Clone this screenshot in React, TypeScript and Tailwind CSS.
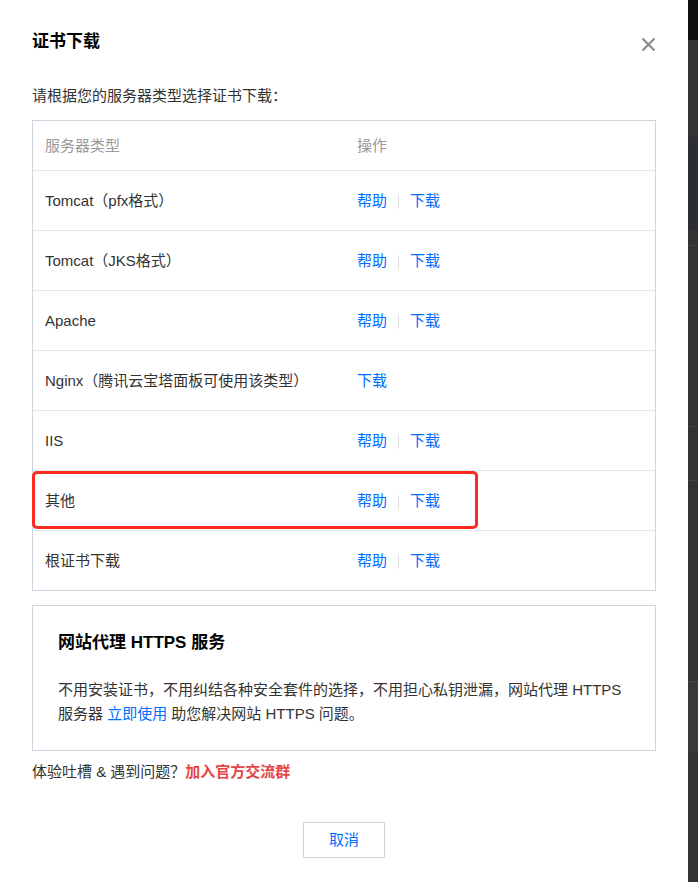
import React from 'react';

type Row = { name: string; help: boolean };

const rows: Row[] = [
  { name: 'Tomcat（pfx格式）', help: true },
  { name: 'Tomcat（JKS格式）', help: true },
  { name: 'Apache', help: true },
  { name: 'Nginx（腾讯云宝塔面板可使用该类型）', help: false },
  { name: 'IIS', help: true },
  { name: '其他', help: true },
  { name: '根证书下载', help: true },
];

const CloseIcon: React.FC = () => (
  <svg width="15" height="15" viewBox="0 0 15 15" className="mt-[7px]">
    <path d="M1.5 1.5 L13.5 13.5 M13.5 1.5 L1.5 13.5" stroke="#888" strokeWidth="2" fill="none" />
  </svg>
);

const Actions: React.FC<{ help: boolean }> = ({ help }) => (
  <div className="flex items-center text-[#006eff]">
    {help && (
      <>
        <span>帮助</span>
        <span className="inline-block w-px h-[14px] bg-[#dddddd] mx-[11px]" />
      </>
    )}
    <span>下载</span>
  </div>
);

const App: React.FC = () => {
  return (
    <div className="flex w-[698px] min-h-[882px] font-['Liberation_Sans','Noto_Sans_CJK_SC',sans-serif] text-[15px] text-[#333]">
      <div className="w-[688px] bg-white px-[32px] pt-[30px] pb-[24px] flex flex-col">
        <div className="flex justify-between items-start">
          <h2 className="text-[17px] leading-[24px] font-bold text-black">证书下载</h2>
          <CloseIcon />
        </div>

        <p className="mt-[32px] leading-[20px]">请根据您的服务器类型选择证书下载：</p>

        <div className="relative mt-[14px] border border-[#cfd5de]">
          <div className="flex items-center h-[49px] pt-px text-[#999]">
            <div className="w-1/2 px-[12px]">服务器类型</div>
            <div className="w-1/2 pl-[13px] pr-[12px]">操作</div>
          </div>
          {rows.map((r) => (
            <div key={r.name} className="flex items-center h-[60px] pt-[2px] border-t border-[#e5e8ed]">
              <div className="w-1/2 px-[12px]">{r.name}</div>
              <div className="w-1/2 pl-[13px] pr-[12px]">
                <Actions help={r.help} />
              </div>
            </div>
          ))}
          {/* annotation over the 其他 row */}
          <div className="absolute left-[-1px] top-[350px] w-[446px] h-[58px] border-[3px] border-[#ff2a1f] rounded-[5px] pointer-events-none" />
        </div>

        <div className="mt-[14px] border border-[#cfd5de] px-[25px] pt-[25px] pb-[24px]">
          <h3 className="text-[17px] leading-[24px] font-bold text-black">网站代理 HTTPS 服务</h3>
          <p className="mt-[23px] leading-[24px]">
            不用安装证书，不用纠结各种安全套件的选择，不用担心私钥泄漏，网站代理 HTTPS 服务器{' '}
            <span className="text-[#006eff]">立即使用</span> 助您解决网站 HTTPS 问题。
          </p>
        </div>

        <p className="mt-[10px] leading-[22px]">
          体验吐槽 &amp; 遇到问题？<span className="text-[#e54545] font-bold">加入官方交流群</span>
        </p>

        <div className="flex justify-center mt-[39px]">
          <button className="w-[82px] h-[36px] border border-[#cfd5de] bg-white text-[#006eff] text-[15px]">
            取消
          </button>
        </div>
      </div>

      <div className="w-[10px] flex flex-col bg-[#333]">
        <div className="h-[40px] bg-[#0f1012]" />
        <div className="h-[97px]" />
        <div className="h-[93px] bg-[#2b2e33]" />
        <div className="h-[15px]" />
        <div className="h-px bg-[#444]" />
        <div className="h-[180px]" />
        <div className="h-px bg-[#444]" />
        <div className="h-[53px]" />
        <div className="h-px bg-[#444]" />
        <div className="h-[200px]" />
        <div className="h-px bg-[#444]" />
        <div className="h-[70px] bg-[#383838]" />
      </div>
    </div>
  );
};

export default App;
